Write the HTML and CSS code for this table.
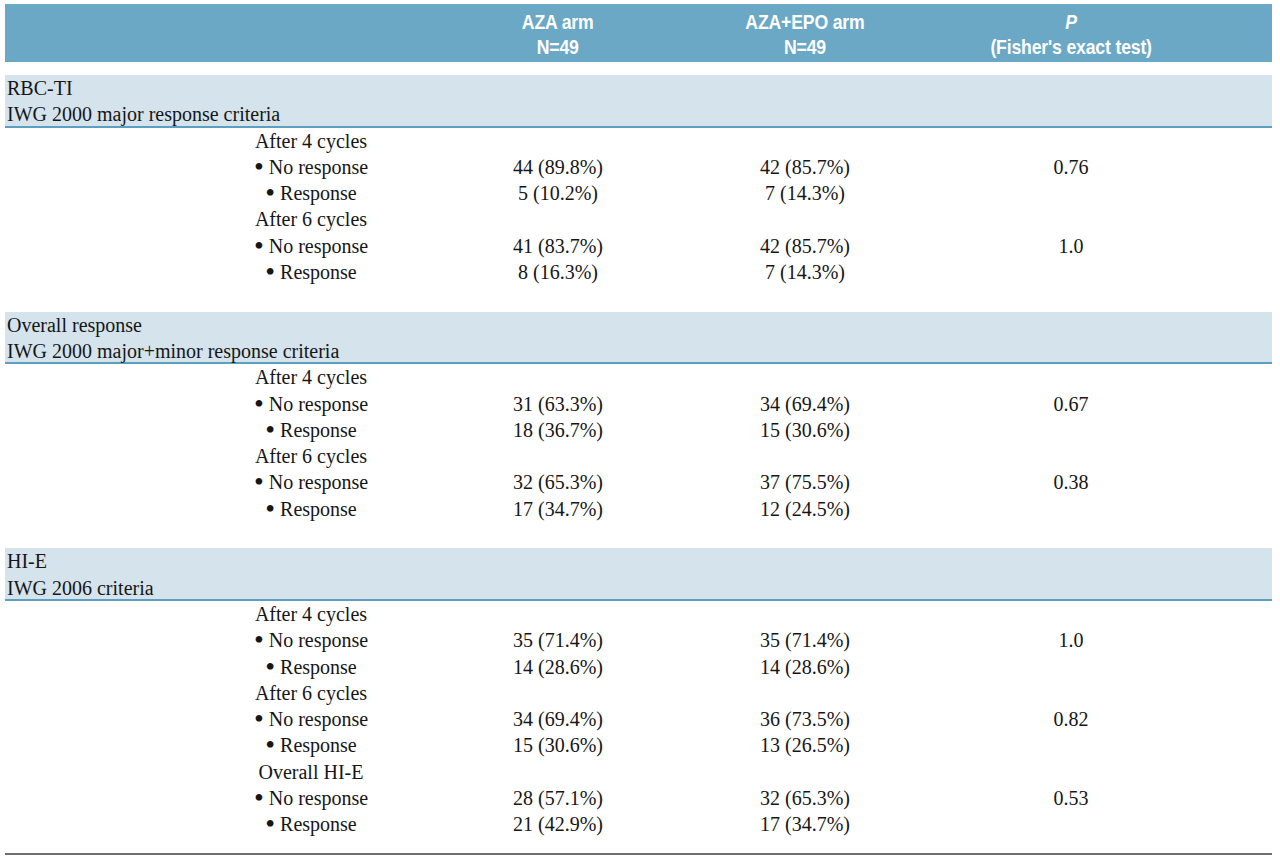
FILE: index.html
```html
<!DOCTYPE html>
<html>
<head>
<meta charset="utf-8">
<link rel="stylesheet" href="styles.css">
</head>
<body>
<table class="results">
  <colgroup>
    <col class="c-indent"><col class="c-label"><col class="c-aza"><col class="c-epo"><col class="c-p"><col class="c-rest">
  </colgroup>
  <thead>
    <tr class="head">
      <th></th><th></th>
      <th><span class="ht">AZA arm<br>N=49</span></th>
      <th><span class="ht">AZA+EPO arm<br>N=49</span></th>
      <th><span class="ht"><i>P</i><br>(Fisher's exact test)</span></th>
      <th></th>
    </tr>
  </thead>
  <tbody>
    <tr class="gap"><td colspan="6"></td></tr>

    <tr class="band"><td colspan="6">RBC-TI<br>IWG 2000 major response criteria</td></tr>
    <tr><td></td><td class="lbl">After 4 cycles</td><td></td><td></td><td></td><td></td></tr>
    <tr><td></td><td class="lbl"><span class="bul">•</span> No response</td><td class="num">44 (89.8%)</td><td class="num">42 (85.7%)</td><td class="num">0.76</td><td></td></tr>
    <tr><td></td><td class="lbl"><span class="bul">•</span> Response</td><td class="num">5 (10.2%)</td><td class="num">7 (14.3%)</td><td></td><td></td></tr>
    <tr><td></td><td class="lbl">After 6 cycles</td><td></td><td></td><td></td><td></td></tr>
    <tr><td></td><td class="lbl"><span class="bul">•</span> No response</td><td class="num">41 (83.7%)</td><td class="num">42 (85.7%)</td><td class="num">1.0</td><td></td></tr>
    <tr><td></td><td class="lbl"><span class="bul">•</span> Response</td><td class="num">8 (16.3%)</td><td class="num">7 (14.3%)</td><td></td><td></td></tr>
    <tr class="blank"><td colspan="6"></td></tr>

    <tr class="band"><td colspan="6">Overall response<br>IWG 2000 major+minor response criteria</td></tr>
    <tr><td></td><td class="lbl">After 4 cycles</td><td></td><td></td><td></td><td></td></tr>
    <tr><td></td><td class="lbl"><span class="bul">•</span> No response</td><td class="num">31 (63.3%)</td><td class="num">34 (69.4%)</td><td class="num">0.67</td><td></td></tr>
    <tr><td></td><td class="lbl"><span class="bul">•</span> Response</td><td class="num">18 (36.7%)</td><td class="num">15 (30.6%)</td><td></td><td></td></tr>
    <tr><td></td><td class="lbl">After 6 cycles</td><td></td><td></td><td></td><td></td></tr>
    <tr><td></td><td class="lbl"><span class="bul">•</span> No response</td><td class="num">32 (65.3%)</td><td class="num">37 (75.5%)</td><td class="num">0.38</td><td></td></tr>
    <tr><td></td><td class="lbl"><span class="bul">•</span> Response</td><td class="num">17 (34.7%)</td><td class="num">12 (24.5%)</td><td></td><td></td></tr>
    <tr class="blank"><td colspan="6"></td></tr>

    <tr class="band"><td colspan="6">HI-E<br>IWG 2006 criteria</td></tr>
    <tr><td></td><td class="lbl">After 4 cycles</td><td></td><td></td><td></td><td></td></tr>
    <tr><td></td><td class="lbl"><span class="bul">•</span> No response</td><td class="num">35 (71.4%)</td><td class="num">35 (71.4%)</td><td class="num">1.0</td><td></td></tr>
    <tr><td></td><td class="lbl"><span class="bul">•</span> Response</td><td class="num">14 (28.6%)</td><td class="num">14 (28.6%)</td><td></td><td></td></tr>
    <tr><td></td><td class="lbl">After 6 cycles</td><td></td><td></td><td></td><td></td></tr>
    <tr><td></td><td class="lbl"><span class="bul">•</span> No response</td><td class="num">34 (69.4%)</td><td class="num">36 (73.5%)</td><td class="num">0.82</td><td></td></tr>
    <tr><td></td><td class="lbl"><span class="bul">•</span> Response</td><td class="num">15 (30.6%)</td><td class="num">13 (26.5%)</td><td></td><td></td></tr>
    <tr><td></td><td class="lbl">Overall HI-E</td><td></td><td></td><td></td><td></td></tr>
    <tr><td></td><td class="lbl"><span class="bul">•</span> No response</td><td class="num">28 (57.1%)</td><td class="num">32 (65.3%)</td><td class="num">0.53</td><td></td></tr>
    <tr><td></td><td class="lbl"><span class="bul">•</span> Response</td><td class="num">21 (42.9%)</td><td class="num">17 (34.7%)</td><td></td><td></td></tr>
    <tr class="end"><td colspan="6"></td></tr>
  </tbody>
</table>
</body>
</html>
```

FILE: styles.css
```css
html, body {
  margin: 0;
  padding: 0;
  background: #ffffff;
}

body {
  padding: 4px 8px 0 5px;
}

.results {
  width: 1267px;
  table-layout: fixed;
  border-collapse: collapse;
  border-spacing: 0;
  font-family: "Liberation Serif", "Times New Roman", serif;
  font-size: 20px;
  color: #161616;
}

.c-indent { width: 178px; }
.c-label { width: 256px; }
.c-aza { width: 238px; }
.c-epo { width: 256px; }
.c-p { width: 276px; }
.c-rest { width: 63px; }

.results td,
.results th {
  padding: 0;
  height: 26.3px;
  line-height: 26.3px;
  white-space: nowrap;
  vertical-align: middle;
}

.head th {
  background: #6aa8c5;
  color: #ffffff;
  font-family: "Liberation Sans Narrow", "Liberation Sans", sans-serif;
  font-weight: bold;
  font-size: 21px;
  line-height: 25px;
  height: 58px;
  text-align: center;
}

.ht {
  display: inline-block;
  transform: scaleX(0.84);
  letter-spacing: -0.2px;
  padding-top: 1px;
}

.head th i {
  font-style: italic;
}

.gap td {
  height: 13px;
  line-height: 13px;
}

.band td {
  background: #d4e3ec;
  height: 52.6px;
  line-height: 26.3px;
  padding-left: 2px;
  box-shadow: inset 0 -2px 0 #5c9fc0;
}

.lbl,
.num {
  text-align: center;
}

.bul {
  font-size: 28px;
  line-height: 10px;
  vertical-align: -2px;
}

.end td {
  height: 15px;
  border-bottom: 2px solid #6e6e6e;
}
```
